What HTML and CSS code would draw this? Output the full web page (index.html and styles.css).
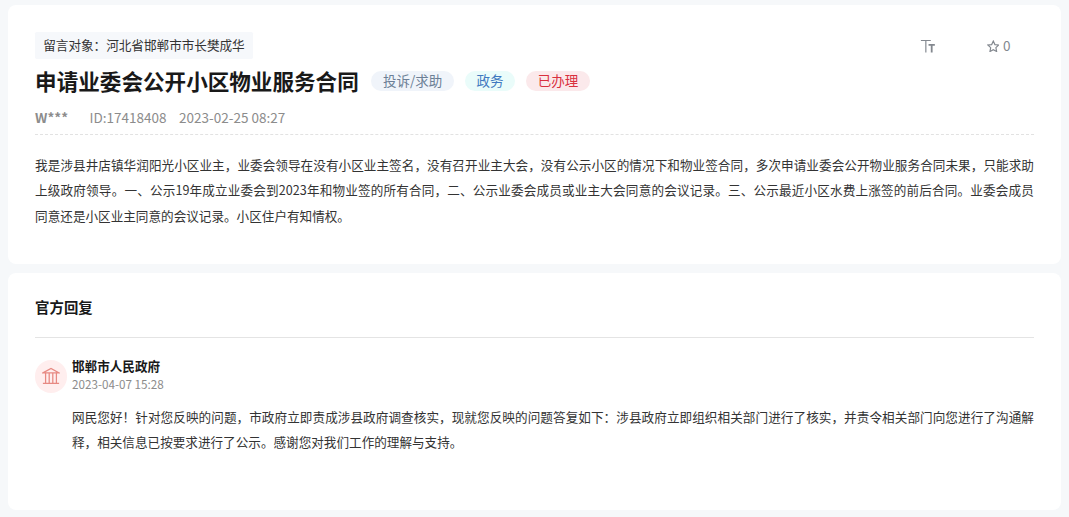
FILE: index.html
```html
<!DOCTYPE html>
<html lang="zh-CN">
<head>
<meta charset="utf-8">
<title>申请业委会公开小区物业服务合同</title>
<link rel="stylesheet" href="styles.css">
</head>
<body>
<main class="page">
  <article class="card message">
    <header class="message-top">
      <p class="target">留言对象：河北省邯郸市市长樊成华</p>
      <div class="actions">
        <button class="action" type="button" aria-label="字号">
          <svg class="icon-size" viewBox="0 0 18 16" aria-hidden="true"><path d="M1 1.700h11M6.500 1.700v13.300"/><path d="M9.500 6.500h7M13 6.500v8.500" stroke-width="2"/></svg>
        </button>
        <button class="action" type="button" aria-label="收藏 0">
          <svg class="icon-star" viewBox="0 0 14 14" aria-hidden="true"><path d="M7 1.200l1.800 3.900 4.200.5-3.100 2.900.8 4.300L7 10.800l-3.700 2 .8-4.300L1 5.600l4.200-.5z"/></svg>
          <span>0</span>
        </button>
      </div>
    </header>
    <div class="title-row">
      <h1 class="title">申请业委会公开小区物业服务合同</h1>
      <span class="tag tag-type">投诉/求助</span>
      <span class="tag tag-field">政务</span>
      <span class="tag tag-state">已办理</span>
    </div>
    <div class="meta">
      <b class="author">W***</b>
      <span>ID:17418408</span>
      <time>2023-02-25 08:27</time>
    </div>
    <p class="text">我是涉县井店镇华润阳光小区业主，业委会领导在没有小区业主签名，没有召开业主大会，没有公示小区的情况下和物业签合同，多次申请业委会公开物业服务合同未果，只能求助上级政府领导。一、公示19年成立业委会到2023年和物业签的所有合同，二、公示业委会成员或业主大会同意的会议记录。三、公示最近小区水费上涨签的前后合同。业委会成员同意还是小区业主同意的会议记录。小区住户有知情权。</p>
  </article>

  <section class="card reply">
    <h2 class="reply-heading">官方回复</h2>
    <div class="reply-item">
      <span class="avatar">
        <svg class="icon-hall" viewBox="0 0 20 20" aria-hidden="true"><path d="M1 6.500L10 1.500l9 5zM1 18.300h18M4 7v11M8 7v11M12 7v11M16 7v11"/></svg>
      </span>
      <div class="reply-content">
        <h3 class="office">邯郸市人民政府</h3>
        <time class="reply-date">2023-04-07 15:28</time>
        <p class="text">网民您好！针对您反映的问题，市政府立即责成涉县政府调查核实，现就您反映的问题答复如下：涉县政府立即组织相关部门进行了核实，并责令相关部门向您进行了沟通解释，相关信息已按要求进行了公示。感谢您对我们工作的理解与支持。</p>
      </div>
    </div>
  </section>
</main>
</body>
</html>
```
FILE: styles.css
```css
* {
  box-sizing: border-box;
}

body {
  margin: 0;
  background: #f6f8fa;
  color: #333;
  font: 14px/28px "Noto Sans CJK SC", sans-serif;
}

h1, h2, h3, p {
  margin: 0;
}

.page {
  display: flex;
  flex-direction: column;
  gap: 10px;
  padding: 6px 9px 8px;
  zoom: 0.9;
}

.card {
  padding: 30px 30px 40px;
  border-radius: 9px;
  background: #fff;
}

.message-top {
  display: flex;
  justify-content: space-between;
  align-items: center;
}

.target {
  padding: 0 9px 2px;
  border-radius: 2px;
  background: #f6f8fb;
}

.actions {
  display: flex;
  gap: 56px;
  padding-right: 26px;
}

.action {
  display: flex;
  align-items: center;
  gap: 4px;
  padding: 0;
  border: 0;
  background: none;
  color: #83888f;
  font: inherit;
  font-size: 15px;
}

.action svg {
  fill: none;
  stroke: currentColor;
  stroke-width: 1.3;
}

.icon-size {
  width: 18px;
  height: 16px;
}

.icon-star {
  width: 14px;
  height: 14px;
}

.title-row {
  display: flex;
  align-items: center;
  gap: 12px;
}

.title {
  margin-right: 2px;
  color: #191919;
  font-size: 24px;
  line-height: 48px;
}

.tag {
  padding: 0 13px;
  border-radius: 11px;
  font-size: 15px;
  line-height: 22px;
}

.tag-type {
  background: #f0f4fa;
  color: #6c7f96;
}

.tag-field {
  background: #eafcfa;
  color: #4179c0;
}

.tag-state {
  background: #fbe9eb;
  color: #d9303e;
}

.meta {
  display: flex;
  gap: 14px;
  padding: 2px 0 3px;
  border-bottom: 1px dashed #e2e2e2;
  color: #8c8c8c;
  font-size: 15px;
  line-height: 30px;
}

.author {
  margin-right: 10px;
}

.message .text {
  margin-top: 19px;
}

.text {
  text-align: justify;
}

.reply {
  padding-top: 15px;
  padding-bottom: 62px;
}

.reply-heading {
  padding: 9px 0 19px;
  border-bottom: 1px solid #e4e4e4;
  color: #191919;
  font-size: 16px;
}

.reply-item {
  display: flex;
  gap: 5px;
  padding-top: 22px;
}

.avatar {
  display: flex;
  flex: none;
  align-items: center;
  justify-content: center;
  width: 36px;
  height: 36px;
  margin-top: 3px;
  border-radius: 50%;
  background: #ffeeee;
  color: #e78982;
}

.icon-hall {
  width: 20px;
  height: 20px;
  fill: none;
  stroke: currentColor;
  stroke-width: 1.4;
}

.reply-content {
  flex: 1;
}

.office {
  color: #191919;
  font-size: 14px;
  line-height: 20px;
}

.reply-date {
  display: block;
  color: #8c8c8c;
  font-size: 13px;
  line-height: 20px;
}

.reply .text {
  margin-top: 12px;
}
```
